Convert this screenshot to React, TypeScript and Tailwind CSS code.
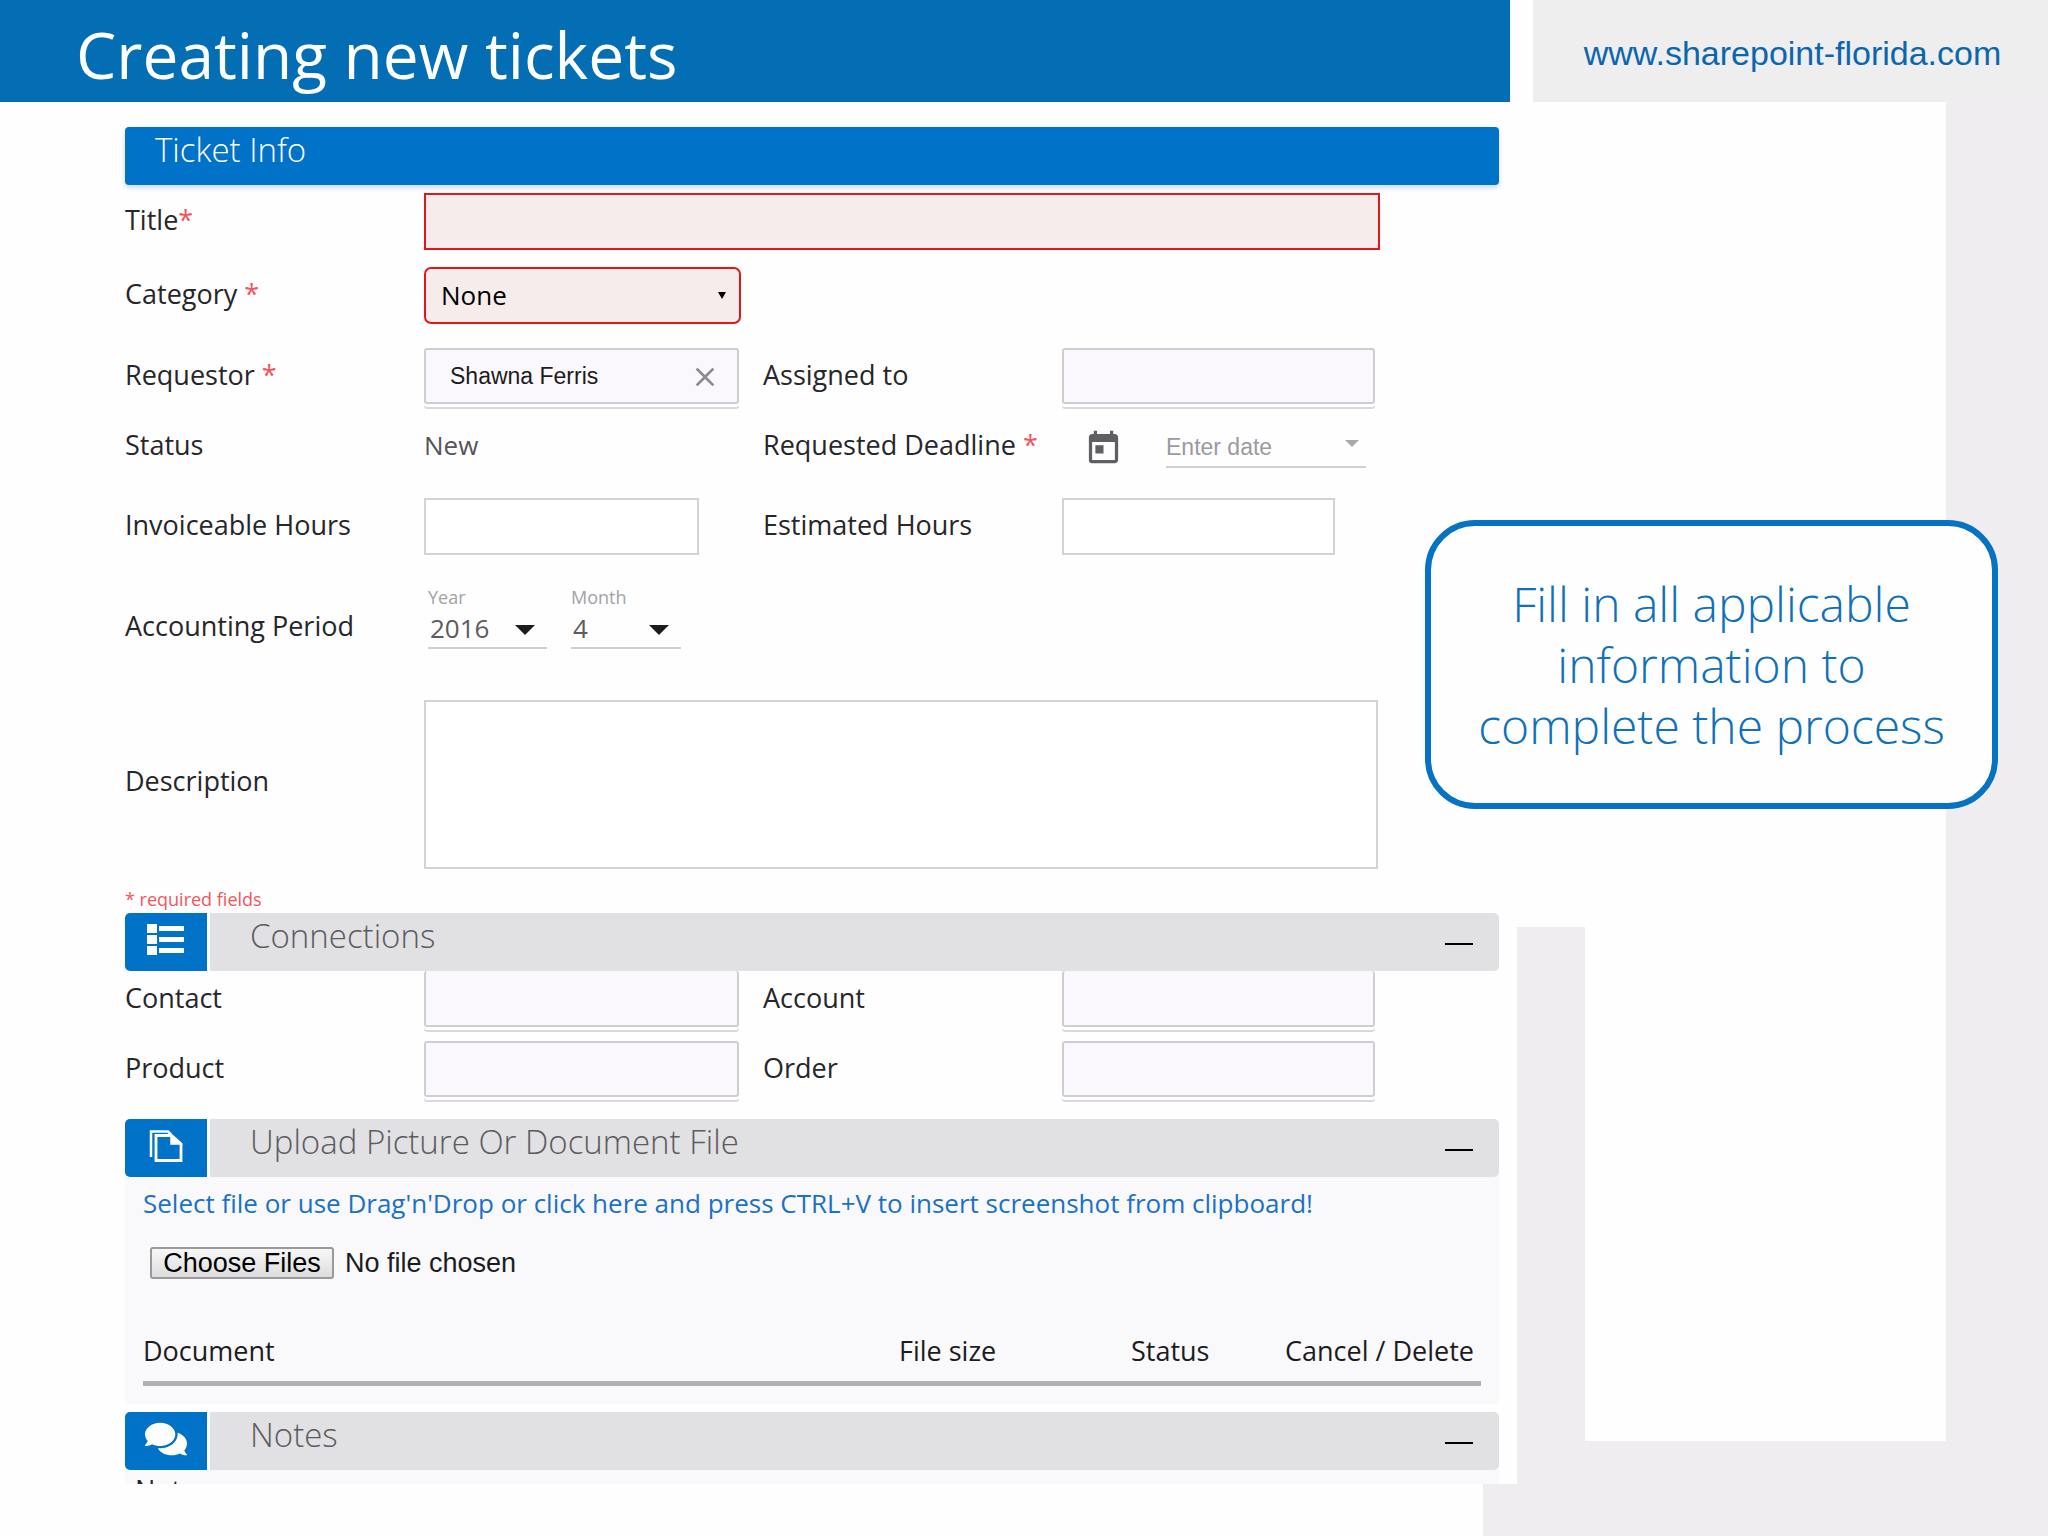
import type { ReactNode } from "react";
import { FaComments } from "react-icons/fa";
import { MdClose, MdToday } from "react-icons/md";

const sectionInput =
  "h-14 rounded-[3px] border-2 border-[#cfcdd2] bg-[#faf8fc] px-4 shadow-[0_3px_0_0_#ffffff,0_5px_0_0_#d9d8dc]";
const hoursInput = "h-[57px] border-2 border-[#d3d2d6] bg-white px-4";

function Caret({ className }: { className: string }) {
  return (
    <svg viewBox="0 0 20 10" preserveAspectRatio="none" className={className} aria-hidden="true">
      <path d="M0 0h20L10 10z" fill="currentColor" />
    </svg>
  );
}

function ListIcon() {
  return (
    <svg width="38" height="32" viewBox="0 0 38 32" fill="white" aria-hidden="true">
      <rect x="0" y="0" width="10" height="9" />
      <rect x="12" y="2" width="25" height="5" />
      <rect x="0" y="11" width="10" height="9" />
      <rect x="12" y="13" width="25" height="5" />
      <rect x="0" y="22" width="10" height="9" />
      <rect x="12" y="24" width="25" height="5" />
    </svg>
  );
}

function CopyIcon() {
  return (
    <svg width="34" height="32" viewBox="0 0 34 32" fill="none" stroke="white" aria-hidden="true">
      <path d="M2 27V1.500h17l3 3" strokeWidth="2.500" />
      <path d="M7 5.500h15.500L32 14v16.500H7z" strokeWidth="2.800" />
      <path d="M22 5.500V14h10z" fill="white" strokeWidth="1.500" />
    </svg>
  );
}

function Label({ htmlFor, children, required }: { htmlFor?: string; children: ReactNode; required?: boolean }) {
  return (
    <label htmlFor={htmlFor} className="block pb-[3px] text-[27px] leading-9 text-[#26262b]">
      {children}
      {required && <span className="text-[#f4545c]">*</span>}
    </label>
  );
}

function Row({ className, children }: { className: string; children: ReactNode }) {
  return (
    <div className={`grid grid-cols-[299px_339px_299px_1fr] items-center ${className}`}>
      {children}
    </div>
  );
}

function SectionBar({ title, icon }: { title: string; icon: ReactNode }) {
  return (
    <div className="flex h-[58px] gap-[3px] overflow-hidden rounded-[5px]">
      <div className="flex w-[82px] items-center justify-center bg-[#0072c8] pb-1">{icon}</div>
      <div className="flex flex-1 items-center justify-between bg-[#e1e0e2] pr-6 pl-10">
        <h2 className="pb-3 text-[33px] leading-10 font-light text-[#5c5b60]">{title}</h2>
        <button type="button" aria-label={`Collapse ${title}`} className="flex h-8 w-8 items-center justify-center">
          <span className="mt-[3px] h-[2px] w-7 bg-black"></span>
        </button>
      </div>
    </div>
  );
}

export default function App() {
  return (
    <div className="flex min-h-screen flex-col overflow-hidden bg-[#fefefe] font-['Open_Sans','Noto_Sans',sans-serif]">
      <header className="flex h-[102px] gap-[23px]">
        <div className="flex flex-1 items-center bg-[#046eb5] pl-[76px]">
          <h1 className="pt-2 text-[64px] leading-none text-white">Creating new tickets</h1>
        </div>
        <div className="flex w-[515px] items-center justify-center bg-[#efeeef]">
          <a href="#" className="pt-1 pl-1 font-['Liberation_Sans',Arial,sans-serif] text-[34px] leading-10 text-[#0b67ad]">
            www.sharepoint-florida.com
          </a>
        </div>
      </header>

      <div className="relative flex flex-1">
        <main className="min-w-0 flex-1 pt-[25px] pr-[18px] pl-[125px]">
          <form>
            <div className="flex h-[58px] items-center rounded-[4px] bg-[#0072c8] px-[30px] shadow-[0_3px_5px_rgba(0,90,160,0.2)]">
              <h2 className="pb-3 text-[33px] leading-10 font-light text-white">Ticket Info</h2>
            </div>

            <div className="mt-2 flex items-center">
              <div className="w-[299px]">
                <Label htmlFor="title" required>Title</Label>
              </div>
              <input id="title" className="mr-[119px] h-[57px] flex-1 border-2 border-[#e5161b] bg-[#f6eceb] px-4 text-2xl" />
            </div>

            <Row className="mt-[17px]">
              <Label htmlFor="category" required>Category </Label>
              <div className="relative w-[317px]">
                <select id="category" className="h-[57px] w-full appearance-none rounded-[7px] border-2 border-[#e5161b] bg-[#f6eceb] px-[15px] text-[26px] text-black">
                  <option>None</option>
                </select>
                <Caret className="pointer-events-none absolute top-[25px] right-[15px] h-[7px] w-2 text-black" />
              </div>
            </Row>

            <Row className="mt-6">
              <Label htmlFor="requestor" required>Requestor </Label>
              <div className="relative w-[315px]">
                <input id="requestor" defaultValue="Shawna Ferris" className={`${sectionInput} w-full pl-6 font-['Liberation_Sans',Arial,sans-serif] text-[23px] text-[#1c1c20]`} />
                <button type="button" aria-label="Remove requestor" className="absolute top-[13px] right-[18px] text-[#8b8a8f]">
                  <MdClose size={32} />
                </button>
              </div>
              <Label htmlFor="assigned">Assigned to</Label>
              <input id="assigned" className={`${sectionInput} w-[313px]`} />
            </Row>

            <Row className="mt-[17px] h-[50px]">
              <Label>Status</Label>
              <span className="pb-[3px] text-[26px] leading-9 text-[#55545a]">New</span>
              <Label htmlFor="deadline" required>Requested Deadline </Label>
              <div className="flex items-center pl-[22px]">
                <MdToday size={39} className="mt-1 text-[#5f5e63]" />
                <div className="relative ml-[43px] w-[200px]">
                  <input id="deadline" placeholder="Enter date" className="h-11 w-full border-b-2 border-[#d0cfd4] pt-1 font-['Liberation_Sans',Arial,sans-serif] text-[23px] placeholder:text-[#9b9aa0]" />
                  <Caret className="pointer-events-none absolute top-4 right-[7px] h-[7px] w-[14px] text-[#a8a7ac]" />
                </div>
              </div>
            </Row>

            <Row className="mt-[27px]">
              <Label htmlFor="invoiceable">Invoiceable Hours</Label>
              <input id="invoiceable" className={`${hoursInput} w-[275px]`} />
              <Label htmlFor="estimated">Estimated Hours</Label>
              <input id="estimated" className={`${hoursInput} w-[273px]`} />
            </Row>

            <div className="mt-[30px] flex items-center">
              <div className="w-[303px] pt-5">
                <Label htmlFor="year">Accounting Period</Label>
              </div>
              <div className="flex gap-6">
                <div className="w-[119px]">
                  <label htmlFor="year" className="block text-lg leading-6 text-[#a3a2a7]">Year</label>
                  <div className="relative">
                    <select id="year" className="h-10 w-full appearance-none border-b-2 border-[#d0cfd4] pl-[2px] text-[26px] leading-9 text-[#5c5b60]">
                      <option>2016</option>
                    </select>
                    <Caret className="pointer-events-none absolute top-4 right-3 h-[10px] w-5 text-[#1d1d1f]" />
                  </div>
                </div>
                <div className="w-[110px]">
                  <label htmlFor="month" className="block text-lg leading-6 text-[#a3a2a7]">Month</label>
                  <div className="relative">
                    <select id="month" className="h-10 w-full appearance-none border-b-2 border-[#d0cfd4] pl-[2px] text-[26px] leading-9 text-[#5c5b60]">
                      <option>4</option>
                    </select>
                    <Caret className="pointer-events-none absolute top-4 right-3 h-[10px] w-5 text-[#1d1d1f]" />
                  </div>
                </div>
              </div>
            </div>

            <div className="mt-[51px] flex items-center">
              <div className="w-[299px] pb-1">
                <Label htmlFor="description">Description</Label>
              </div>
              <textarea id="description" className="mr-[121px] h-[169px] flex-1 resize-none border-2 border-[#d3d2d6] bg-white p-4 text-2xl"></textarea>
            </div>

            <p className="pt-[18px] pb-[2px] text-lg leading-6 text-[#f4545c]">* required fields</p>

            <SectionBar title="Connections" icon={<ListIcon />} />
            <Row className="">
              <Label htmlFor="contact">Contact</Label>
              <input id="contact" className={`${sectionInput} w-[315px] border-t-0`} />
              <Label htmlFor="account">Account</Label>
              <input id="account" className={`${sectionInput} w-[313px] border-t-0`} />
            </Row>
            <Row className="mt-[14px] mb-[22px]">
              <Label htmlFor="product">Product</Label>
              <input id="product" className={`${sectionInput} w-[315px]`} />
              <Label htmlFor="order">Order</Label>
              <input id="order" className={`${sectionInput} w-[313px]`} />
            </Row>

            <SectionBar title="Upload Picture Or Document File" icon={<CopyIcon />} />
            <div className="mb-2 h-[227px] rounded-b-[5px] bg-[#f9f8fb] px-[18px] pt-2">
              <label htmlFor="files" className="block text-[26px] leading-9 text-[#1a71c8]">
                Select file or use Drag'n'Drop or click here and press CTRL+V to insert screenshot from clipboard!
              </label>
              <input
                id="files"
                type="file"
                multiple
                className="mt-[26px] ml-[7px] block font-['Liberation_Sans',Arial,sans-serif] text-[27px] leading-8 text-[#1c1c20] file:mr-[11px] file:h-8 file:w-[184px] file:rounded-[3px] file:border-2 file:border-solid file:border-[#9a9a9d] file:bg-linear-to-b file:from-[#f7f7f7] file:to-[#dddddd] file:leading-7 file:text-black"
              />
              <table className="mt-[54px] w-full table-fixed border-b-[5px] border-[#b1b0b3] text-left text-[27px] leading-9 text-[#1c1c20]">
                <thead>
                  <tr className="h-[50px] align-top">
                    <th className="font-normal">Document</th>
                    <th className="w-[232px] font-normal">File size</th>
                    <th className="w-[154px] font-normal">Status</th>
                    <th className="w-[196px] font-normal whitespace-nowrap">Cancel / Delete</th>
                  </tr>
                </thead>
              </table>
            </div>

            <SectionBar title="Notes" icon={<FaComments size={42} className="text-white" />} />
            <div className="h-[14px] overflow-hidden bg-[#f9f8fb] pt-[2px] pl-[10px]">
              <Label>Note</Label>
            </div>
          </form>
        </main>

        <aside className="flex w-[531px]">
          <div className="flex flex-1 flex-col">
            <div className="h-[825px]"></div>
            <div className="flex flex-1">
              <div className="w-[68px] bg-[#efedf0]"></div>
              <div className="flex-1"></div>
            </div>
            <div className="h-[43px] bg-[#efedf0]"></div>
          </div>
          <div className="w-[102px] bg-[#efedf0]"></div>
        </aside>

        <div className="absolute top-[418px] right-[50px] flex h-[289px] w-[573px] items-center justify-center rounded-[50px] border-6 border-[#0572c4] bg-[#fefefe]">
          <p className="w-[500px] text-center text-[48px] leading-[61px] font-light text-[#0f70bb]">
            Fill in all applicable information to complete the process
          </p>
        </div>
      </div>

      <footer className="flex h-[52px] justify-end">
        <div className="w-[565px] bg-[#efedf0]"></div>
      </footer>
    </div>
  );
}
